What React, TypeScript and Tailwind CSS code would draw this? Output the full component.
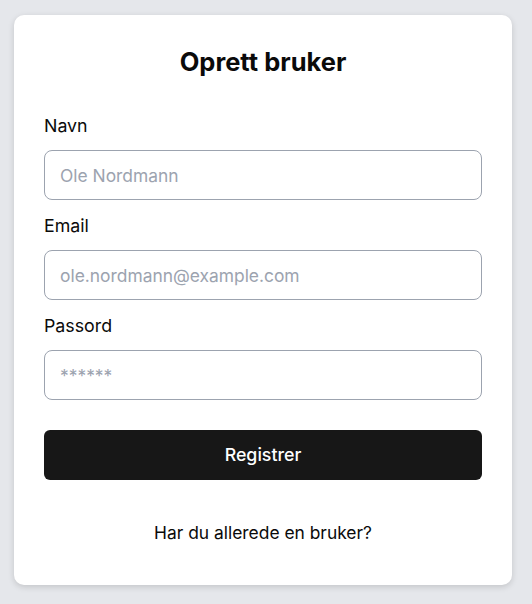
import React from "react";

export default function App() {
  return (
    <div className="min-h-[604px] bg-[#e5e7eb] pt-[15px] px-[14px]" style={{ fontFamily: "Inter, 'Noto Sans', sans-serif" }}>
      <div className="w-[498px] bg-white rounded-[10px] shadow-[0_2px_6px_rgba(0,0,0,0.15)] px-[30px] pt-[31px] pb-[38px]">
        <h1 className="text-[25.5px] leading-[32px] font-bold text-center text-[#0a0a0a]">Oprett bruker</h1>
        <div className="mt-[34px] flex flex-col">
          <label className="text-[17.8px] leading-[28px] text-[#0a0a0a]">Navn</label>
          <input className="mt-[10px] h-[50px] w-full rounded-[8px] border border-[#9ca3af] px-[15px] text-[17.4px] placeholder:text-[#9ca3af] outline-none" placeholder="Ole Nordmann" />
          <label className="mt-[12px] text-[17.8px] leading-[28px] text-[#0a0a0a]">Email</label>
          <input className="mt-[10px] h-[50px] w-full rounded-[8px] border border-[#9ca3af] px-[15px] text-[17.4px] placeholder:text-[#9ca3af] outline-none" placeholder="ole.nordmann@example.com" />
          <label className="mt-[12px] text-[17.8px] leading-[28px] text-[#0a0a0a]">Passord</label>
          <input className="mt-[10px] h-[50px] w-full rounded-[8px] border border-[#9ca3af] px-[15px] text-[17.4px] placeholder:text-[#9ca3af] outline-none" placeholder="******" />
          <button className="mt-[30px] h-[50px] w-full rounded-[6px] bg-[#171717] text-white text-[17.8px] font-medium">Registrer</button>
          <p className="mt-[39px] text-center text-[17.4px] leading-[28px] text-[#0a0a0a]">Har du allerede en bruker?</p>
        </div>
      </div>
    </div>
  );
}
